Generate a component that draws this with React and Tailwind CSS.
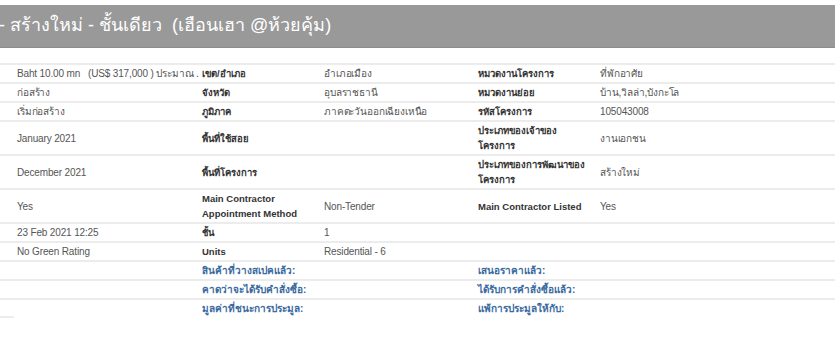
import React from "react";

const rows = [
  ["Baht 10.00 mn\u00a0\u00a0\u00a0(US$ 317,000 ) ประมาณ .", "เขต/อำเภอ", "อำเภอเมือง", "หมวดงานโครงการ", "ที่พักอาศัย"],
  ["ก่อสร้าง", "จังหวัด", "อุบลราชธานี", "หมวดงานย่อย", "บ้าน,วิลล่า,บังกะโล"],
  ["เริ่มก่อสร้าง", "ภูมิภาค", "ภาคตะวันออกเฉียงเหนือ", "รหัสโครงการ", "105043008"],
  ["January 2021", "พื้นที่ใช้สอย", "", ["ประเภทของเจ้าของ", "โครงการ"], "งานเอกชน"],
  ["December 2021", "พื้นที่โครงการ", "", ["ประเภทของการพัฒนาของ", "โครงการ"], "สร้างใหม่"],
  ["Yes", ["Main Contractor", "Appointment Method"], "Non-Tender", "Main Contractor Listed", "Yes"],
  ["23 Feb 2021 12:25", "ชั้น", "1", "", ""],
  ["No Green Rating", "Units", "Residential - 6", "", ""],
];

const blueRows = [
  ["สินค้าที่วางสเปคแล้ว:", "เสนอราคาแล้ว:"],
  ["คาดว่าจะได้รับคำสั่งซื้อ:", "ได้รับการคำสั่งซื้อแล้ว:"],
  ["มูลค่าที่ชนะการประมูล:", "แพ้การประมูลให้กับ:"],
];

function Lines({ v }) {
  if (Array.isArray(v)) {
    return (
      <>
        {v[0]}
        <br />
        {v[1]}
      </>
    );
  }
  return v;
}

export default function App() {
  const base = "pl-[3px] pr-[2px] py-[1px] align-middle";
  const bb = " border-b-2 border-[#ececec]";
  const val = base + bb + " text-[10px] tracking-[-0.15px] text-[#555555]";
  const lab = base + bb + " text-[9.5px] font-bold text-[#333333] whitespace-nowrap";
  const blue = base + " text-[10px] font-bold text-[#3a6aa0] whitespace-nowrap";
  return (
    <div
      className="w-[835px] h-[339px] bg-white overflow-hidden"
      style={{ fontFamily: '"Liberation Sans", Arial, sans-serif' }}
    >
      <div className="mt-[5px] h-[43px] bg-[#999999] border-b border-[#8c8c8c] flex items-center">
        <h1 className="-ml-[1px] text-white text-[18px] leading-none whitespace-nowrap pb-[2px]">
          - สร้างใหม่ - ชั้นเดียว&nbsp;&nbsp;(เฮือนเฮา @ห้วยคุ้ม)
        </h1>
      </div>
      <table className="mt-[15px] w-[835px] table-fixed border-collapse border-t-2 border-[#ececec] leading-[15px]">
        <colgroup>
          <col className="w-[14px]" />
          <col className="w-[185px]" />
          <col className="w-[122px]" />
          <col className="w-[154px]" />
          <col className="w-[122px]" />
          <col />
        </colgroup>
        <tbody>
          {rows.map((r, i) => (
            <tr key={i}>
              <td className={base + bb}></td>
              <td className={val + " whitespace-nowrap"}>{r[0]}</td>
              <td className={lab}><Lines v={r[1]} /></td>
              <td className={val}>{r[2]}</td>
              <td className={lab}><Lines v={r[3]} /></td>
              <td className={val}>{r[4]}</td>
            </tr>
          ))}
          {blueRows.map((r, i) => {
            const last = i === 2;
            return (
              <tr key={"b" + i}>
                <td className={base + bb}></td>
                <td className={last ? base : base + bb}></td>
                <td className={last ? blue : blue + bb} colSpan={2}>{r[0]}</td>
                <td className={last ? blue : blue + bb} colSpan={2}>{r[1]}</td>
              </tr>
            );
          })}
        </tbody>
      </table>
    </div>
  );
}
